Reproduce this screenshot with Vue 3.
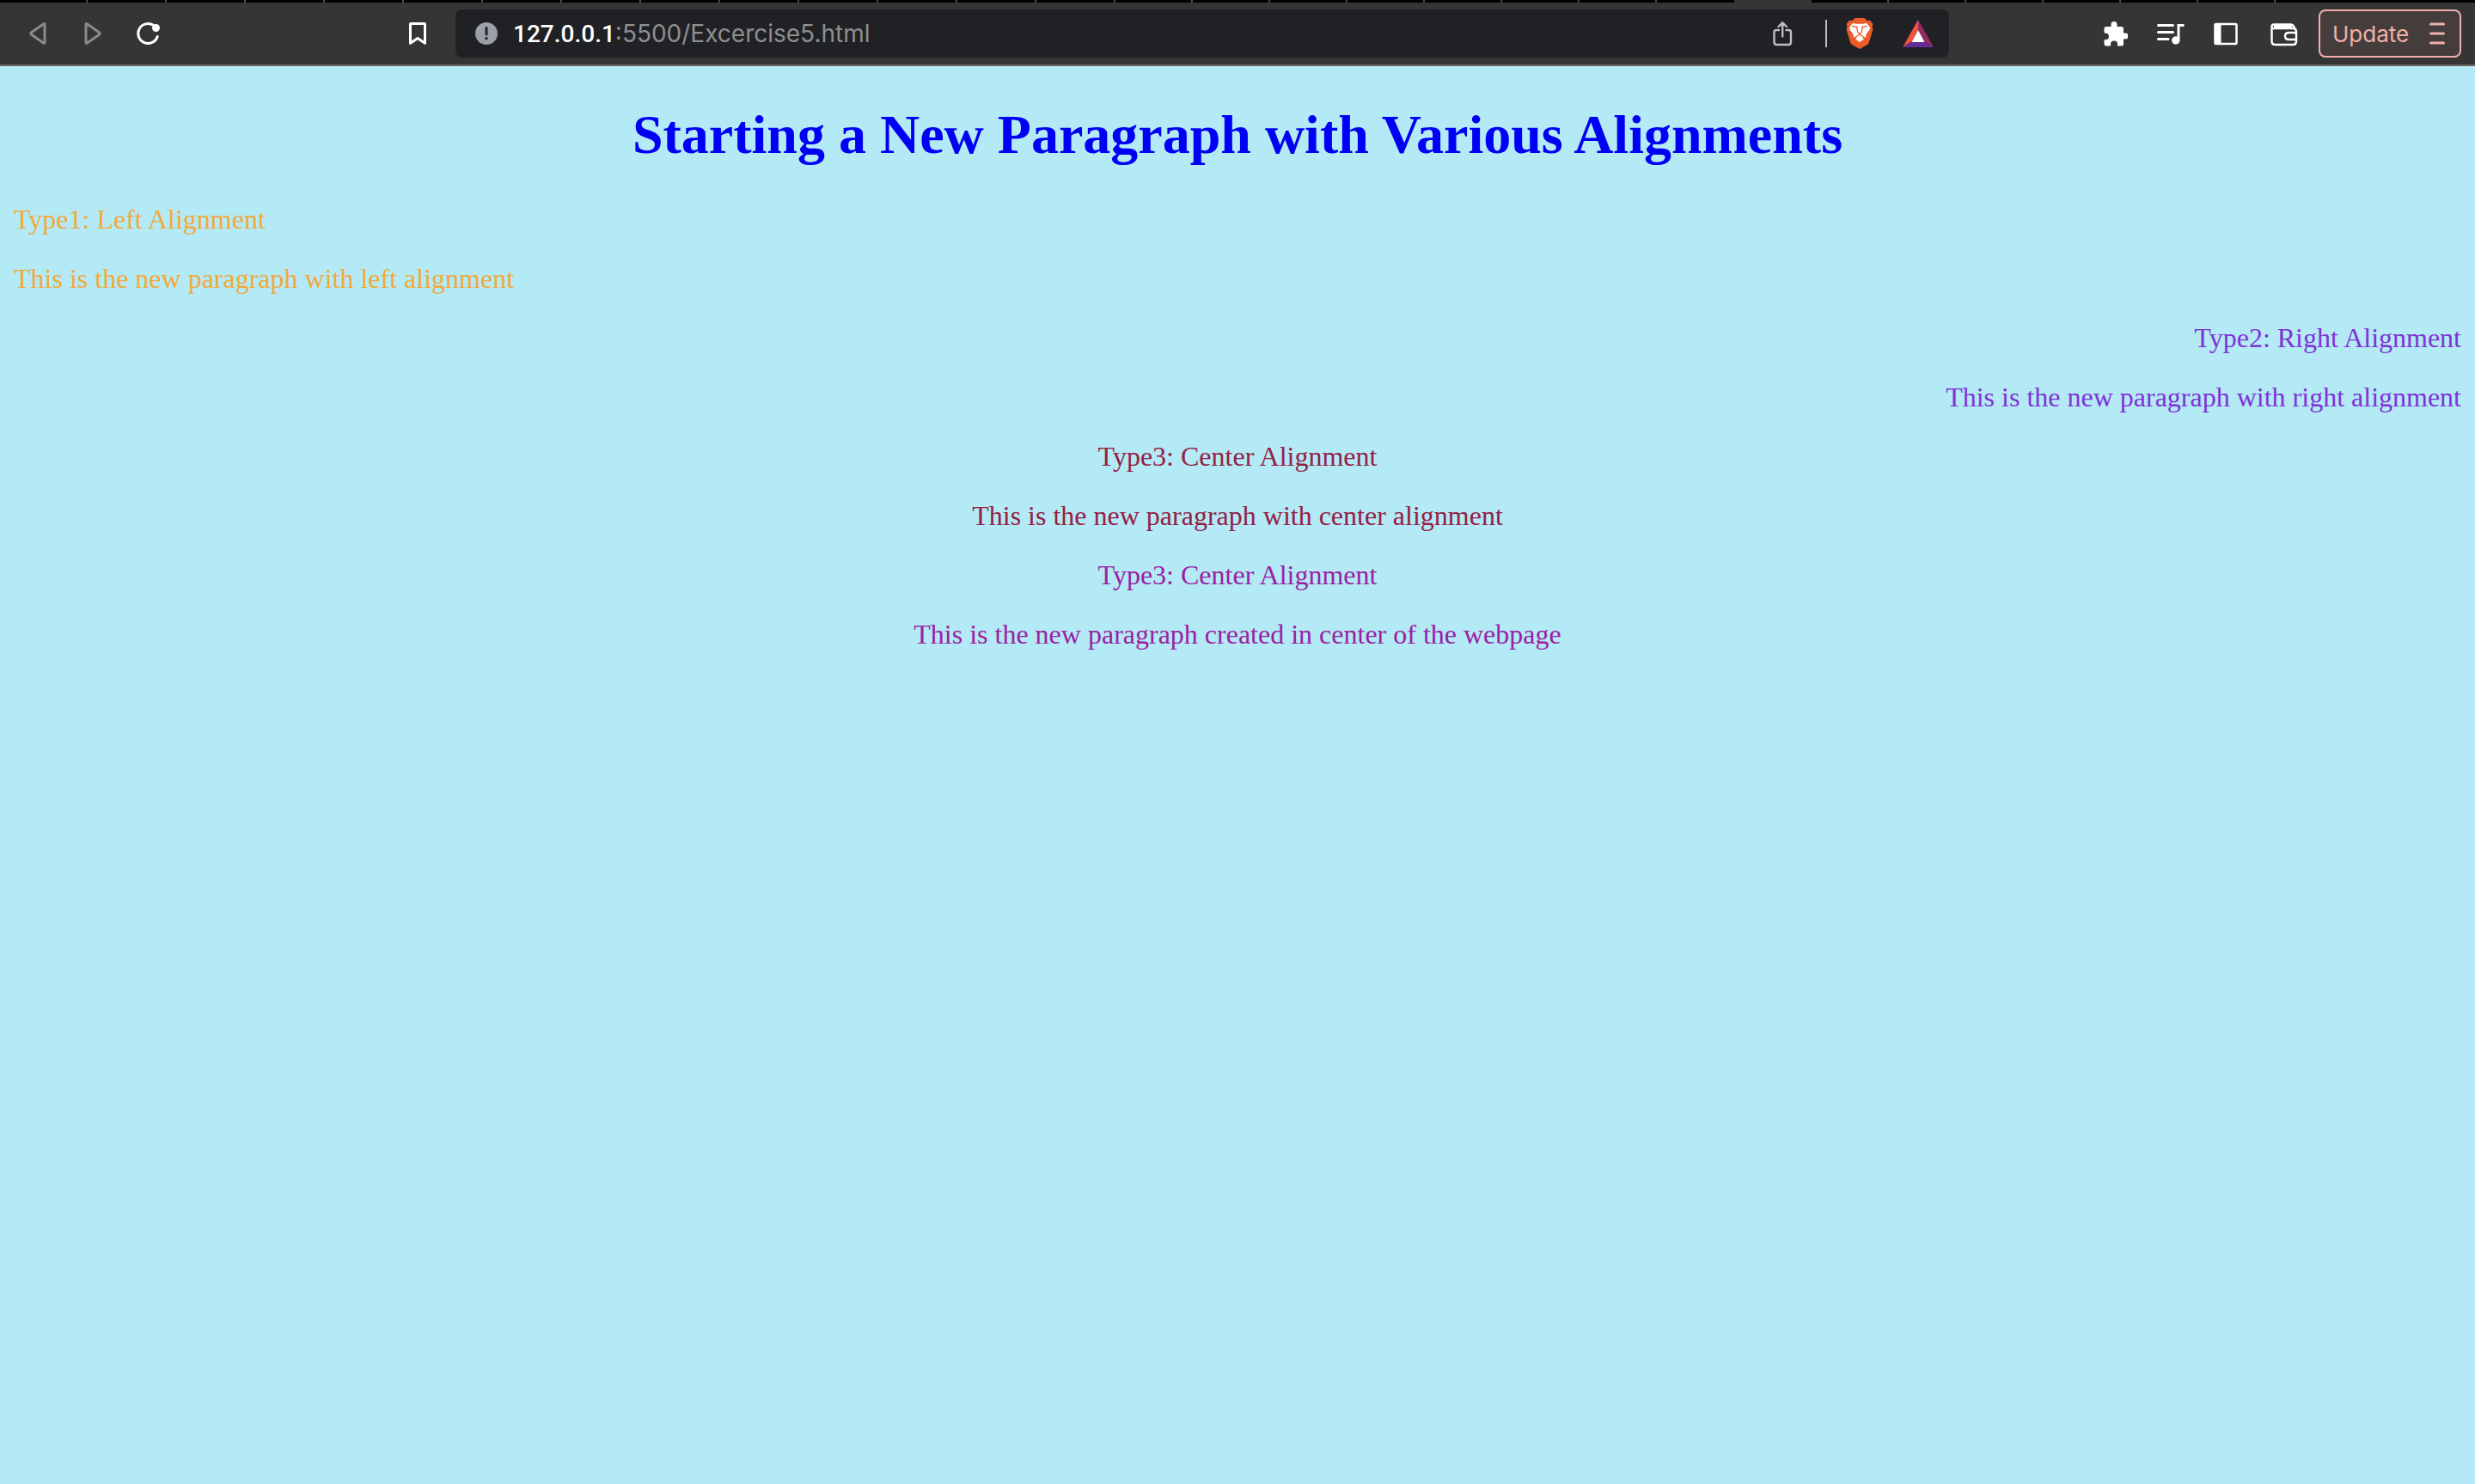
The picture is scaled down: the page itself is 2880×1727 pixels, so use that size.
<script setup>
const tabsBefore = [
  { first: true },
  ...Array.from({ length: 13 }, () => ({ wide: true })),
  ...Array.from({ length: 8 }, () => ({})),
]
const tabsAfter = Array.from({ length: 6 }, () => ({}))

const sections = [
  {
    tone: 'left',
    lines: ['Type1: Left Alignment', 'This is the new paragraph with left alignment'],
  },
  {
    tone: 'right',
    lines: ['Type2: Right Alignment', 'This is the new paragraph with right alignment'],
  },
  {
    tone: 'center',
    lines: ['Type3: Center Alignment', 'This is the new paragraph with center alignment'],
  },
  {
    tone: 'middle',
    lines: ['Type3: Center Alignment', 'This is the new paragraph created in center of the webpage'],
  },
]
</script>

<template>
  <div class="browser">
    <div class="tabs">
      <span v-for="(tab, i) in tabsBefore" :key="'b' + i" class="tab" :class="{ first: tab.first, wide: tab.wide, last: i === tabsBefore.length - 1 }"></span>
      <span class="tab active"></span>
      <span v-for="(tab, i) in tabsAfter" :key="'a' + i" class="tab"></span>
    </div>

    <header class="toolbar">
      <nav class="nav">
        <button class="tool muted" aria-label="Back">
          <svg width="32" height="32" viewBox="0 0 32 32" fill="none" stroke="currentColor" stroke-width="3" stroke-linejoin="round">
            <path d="M24 5.500V26.500Q24 28 22.500 27L8.500 17.200Q7 16 8.500 14.800L22.500 5Q24 4 24 5.500Z" />
          </svg>
        </button>
        <button class="tool muted" aria-label="Forward">
          <svg width="32" height="32" viewBox="0 0 32 32" fill="none" stroke="currentColor" stroke-width="3" stroke-linejoin="round">
            <path d="M8 5.500V26.500Q8 28 9.500 27L23.500 17.200Q25 16 23.500 14.800L9.500 5Q8 4 8 5.500Z" />
          </svg>
        </button>
        <button class="tool" aria-label="Reload">
          <svg width="32" height="32" viewBox="0 0 32 32" fill="none" stroke="currentColor" stroke-width="3" stroke-linecap="round">
            <path d="M22.500 6.300A11.500 11.500 0 1 0 27.200 19.500" />
            <circle cx="25.500" cy="9.500" r="4.500" fill="currentColor" stroke="none" />
          </svg>
        </button>
      </nav>

      <button class="tool bookmark" aria-label="Bookmark this page">
        <svg width="32" height="32" viewBox="0 0 32 32" fill="none" stroke="currentColor" stroke-width="3" stroke-linejoin="round">
          <path d="M8 4.500H24Q24.500 4.500 24.500 5V27.300L16 21.500L7.500 27.300V5Q7.500 4.500 8 4.500Z" />
        </svg>
      </button>

      <div class="address">
        <svg class="info" width="26" height="26" viewBox="0 0 26 26">
          <circle cx="13" cy="13" r="13" fill="#9aa0a6" />
          <path d="M13 6.500V14" stroke="#202124" stroke-width="3" stroke-linecap="round" />
          <circle cx="13" cy="18.800" r="1.700" fill="#202124" />
        </svg>
        <label class="host" for="url">127.0.0.1</label>
        <input id="url" class="url" type="text" value=":5500/Excercise5.html" spellcheck="false" />
        <button class="tool share" aria-label="Share">
          <svg width="32" height="32" viewBox="0 0 32 32" fill="none" stroke="currentColor" stroke-width="2.400" stroke-linecap="round" stroke-linejoin="round">
            <path d="M12 12H9Q6.500 12 6.500 14.500V26Q6.500 29 9.500 29H23Q26 29 26 26V14.500Q26 12 23.500 12H20.500M16.200 19.500V3.500M11.500 8L16.200 3.300L21 8" />
          </svg>
        </button>
        <span class="divider"></span>
        <button class="tool brave" aria-label="Brave Shields">
          <svg width="32" height="36" viewBox="0 0 32 36">
            <path d="M10.500 0H21.500L24.500 3L28 2.800L31.500 7L30.500 10L31.500 13L27 28Q26.500 30 25 31L16 36L7 31Q5.500 30 5 28L.5 13L1.500 10L.5 7L4 2.800L7.500 3Z" fill="#ec5b2a" />
            <path d="M8 6L12 6.800H20L24 6L28 11L27.500 13.500L23.500 19L23 22.500L20 23L16 28L12 23L9 22.500L8.500 19L4.500 13.500L4 11Z" fill="#fff" />
            <path d="M7 9.300L13.500 10.500M25 9.300L18.500 10.500M13.500 10.500L12.800 12.500L14 17L16 18.200L18 17L19.200 12.500L18.500 10.500M10 23L16 19L22 23M16 18V20" fill="none" stroke="#ec5b2a" stroke-width="1.300" stroke-linejoin="round" />
            <path d="M16 22L21 24.500L16 28L11 24.500Z" fill="#fff" />
          </svg>
        </button>
        <button class="tool bat" aria-label="Brave Rewards">
          <svg width="36" height="32" viewBox="0 0 36 32">
            <path d="M18 0V12L11 25L0 32Z" fill="#f0533a" />
            <path d="M18 0V12L25 25L36 32Z" fill="#962b62" />
            <path d="M0 32L11 25H25L36 32Z" fill="#642e96" />
            <path d="M18 12L25.500 26H10.500Z" fill="#fff" />
          </svg>
        </button>
      </div>

      <div class="actions">
        <button class="tool" aria-label="Extensions">
          <svg width="32" height="32" viewBox="-2 0 32 32" fill="currentColor">
            <path d="M10.500 8V6Q10.500 2 14 2T17.500 6V8H22.500Q25 8 25 10.500V15.500H27Q30.500 15.500 30.500 19T27 22.500H25V28Q25 30.500 22.500 30.500H18V28.500Q18 24.500 14 24.500T10 28.500V30.500H5Q2.500 30.500 2.500 28V23.200H4Q8 23.200 8 19.500T4 15.500H2.500V10.500Q2.500 8 5 8Z" />
          </svg>
        </button>
        <button class="tool" aria-label="Media controls">
          <svg width="32" height="32" viewBox="0 0 32 32" fill="none" stroke="currentColor" stroke-width="3">
            <path d="M1.500 6.500H18.500M1.500 14.500H18.500M1.500 22.500H13" stroke-linecap="round" />
            <path d="M31.500 6.500H25V24" />
            <circle cx="21.800" cy="24" r="4.700" fill="currentColor" stroke="none" />
          </svg>
        </button>
        <button class="tool" aria-label="Sidebar">
          <svg width="32" height="32" viewBox="0 0 32 32">
            <rect x="1.500" y="5" width="25" height="23" rx="1" fill="none" stroke="currentColor" stroke-width="2.500" />
            <path d="M1 5H8.500V28H1Z" fill="currentColor" />
          </svg>
        </button>
        <button class="tool" aria-label="Wallet">
          <svg width="32" height="32" viewBox="0 0 32 32" fill="none" stroke="currentColor" stroke-width="2.500" stroke-linejoin="round">
            <path d="M1.500 10V25Q1.500 29 5.500 29H26Q30 29 30 25V14Q30 10 26 10H1.500V8Q1.500 5.500 4 5.500H24Q26 5.500 27 7.500L28.500 11M4 8H25" />
            <path d="M30.500 15H21.500Q17 15 17 19T21.500 23H30.500" />
          </svg>
        </button>
      </div>

      <button class="update">
        <span>Update</span>
        <svg width="18" height="26" viewBox="0 0 18 26" fill="none" stroke="currentColor" stroke-width="3" stroke-linecap="round">
          <path d="M1.500 2H16.500M1.500 13H16.500M1.500 24H16.500" />
        </svg>
      </button>
    </header>

    <main class="page">
      <h1>Starting a New Paragraph with Various Alignments</h1>
      <section v-for="section in sections" :key="section.tone" :class="section.tone">
        <p v-for="line in section.lines" :key="line">{{ line }}</p>
      </section>
    </main>
  </div>
</template>

<style>
body {
  margin: 0;
  background: #b3eaf6;
}
</style>

<style scoped>
.browser {
  min-height: 100vh;
  background: #b3eaf6;
}

.tabs {
  display: flex;
  height: 3px;
  overflow: hidden;
  background: #000;
}

.tab {
  box-sizing: border-box;
  flex: none;
  width: 90px;
  border-right: 2px solid #4d4d4d;
}

.tab.first {
  width: 102px;
}

.tab.wide {
  width: 92px;
}

.tab.last {
  border-right: 0;
}

.tab.active {
  border: 0;
  background: #353535;
}

.toolbar {
  display: flex;
  align-items: center;
  box-sizing: border-box;
  height: 74px;
  padding: 0 16px 0 28px;
  border-bottom: 2px solid #6b6562;
  background: #353535;
  font-family: Inter, "Liberation Sans", sans-serif;
  font-size: 26px;
}

button {
  margin: 0;
  border: 0;
  background: none;
  font: inherit;
}

.tool {
  display: flex;
  flex: none;
  padding: 0;
  color: #fff;
}

.nav {
  display: flex;
  gap: 32px;
}

.tool.muted {
  color: #8a8a8a;
}

.bookmark {
  margin-left: 282px;
}

.address {
  display: flex;
  flex: 1;
  align-items: center;
  box-sizing: border-box;
  height: 56px;
  margin-left: 28px;
  padding: 0 18px 0 23px;
  border-radius: 8px;
  background: #202124;
  font-size: 28px;
}

.info {
  flex: none;
  margin-right: 18px;
}

.host {
  color: #fff;
  font-family: Roboto, "Liberation Sans", sans-serif;
  font-weight: 500;
}

.url {
  flex: 1;
  min-width: 0;
  height: 40px;
  padding: 0;
  border: 0;
  outline: 0;
  background: none;
  color: #8e8f91;
  font: inherit;
}

.tool.share {
  color: #bdbec0;
}

.divider {
  width: 2px;
  height: 32px;
  margin: 0 22px 0 34px;
  background: #bdbec0;
}

.bat {
  margin-left: 34px;
}

.actions {
  display: flex;
  gap: 34px;
  margin: 0 24px 0 176px;
}

.update {
  display: flex;
  flex: none;
  align-items: center;
  justify-content: space-between;
  box-sizing: border-box;
  width: 166px;
  height: 56px;
  padding: 0 17px 0 14px;
  border: 2px solid #efb0ab;
  border-radius: 8px;
  background: #453d3c;
  color: #efb0ab;
}

.page {
  display: flow-root;
  padding: 0 16px;
  font-family: "Liberation Serif", serif;
  font-size: 32px;
}

h1 {
  margin: 43px 0;
  color: #0000f5;
  font-size: 64px;
  line-height: 74px;
  text-align: center;
}

p {
  margin: 32px 0;
  line-height: 37px;
}

.left {
  color: #f2a93b;
}

.right {
  color: #7f32d8;
  text-align: right;
}

.center {
  color: #942044;
  text-align: center;
}

.middle {
  color: #9a21a4;
  text-align: center;
}
</style>
